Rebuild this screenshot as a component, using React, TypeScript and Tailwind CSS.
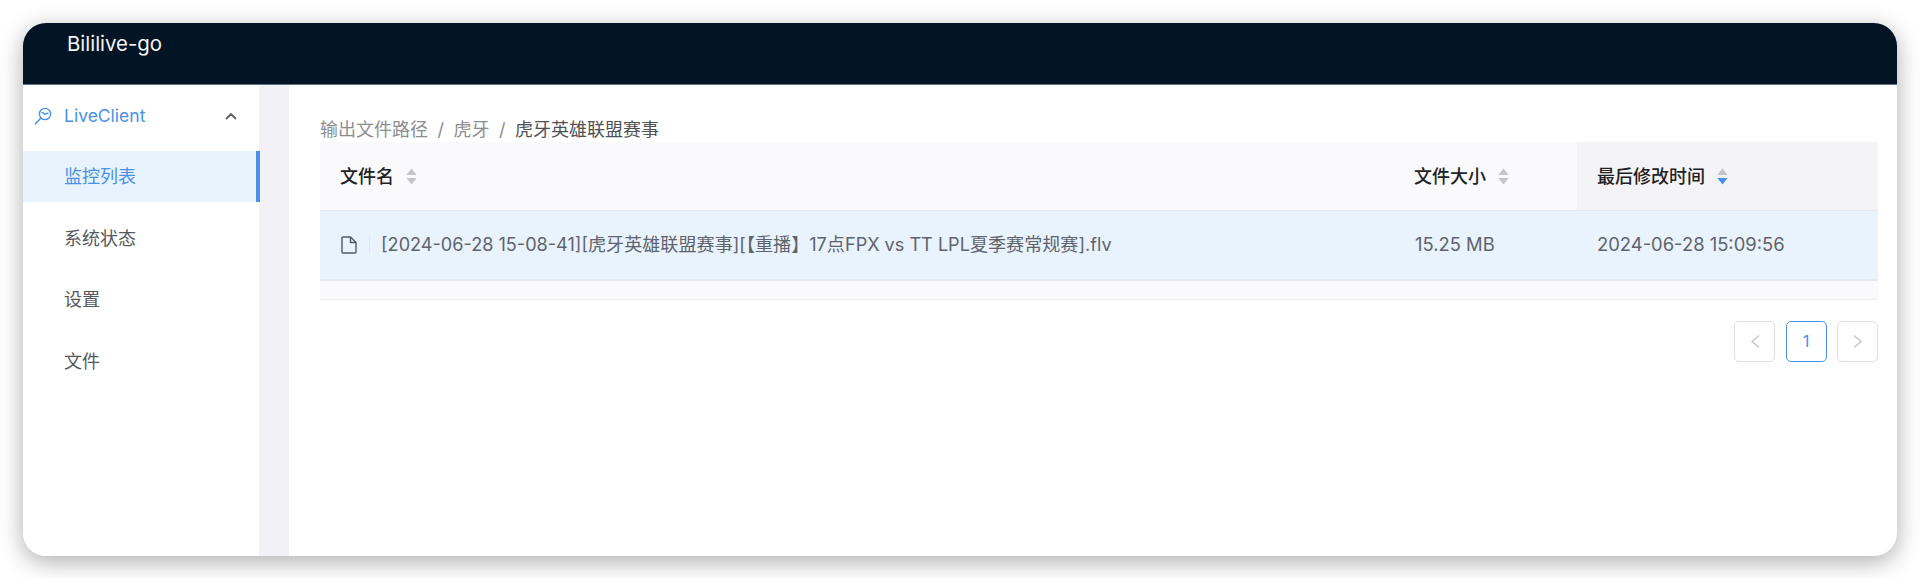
function Sort({ active = false }: { active?: boolean }) {
  return (
    <svg width="11" height="17" viewBox="0 0 11 17" className="shrink-0">
      <path d="M5.5 0.5 L10.6 7 H0.4 Z" fill="#c4c5c8" />
      <path d="M5.5 16.5 L10.6 10 H0.4 Z" fill={active ? "#4a90e8" : "#c4c5c8"} />
    </svg>
  );
}

function HeadCell({ label, active = false, className = "" }: { label: string; active?: boolean; className?: string }) {
  return (
    <div className={`flex items-center gap-[12px] pl-[20px] text-[18px] font-medium text-[#1f2225] ${className}`}>
      <span>{label}</span>
      <Sort active={active} />
    </div>
  );
}

function PageButton({ children, active = false }: { children: React.ReactNode; active?: boolean }) {
  return (
    <div
      className={`flex h-[41px] w-[41px] items-center justify-center rounded-[5px] border text-[16.5px] ${
        active ? "border-[#4a90e8] text-[#4a90e8]" : "border-[#e0e0e6] text-[#c2c2c5]"
      }`}
    >
      {children}
    </div>
  );
}

export default function App() {
  return (
    <div className="h-[578px] w-[1920px] overflow-hidden bg-white p-[23px] pb-[22px] font-['Inter','Noto_Sans_CJK_SC',sans-serif]">
      <div className="flex h-[533px] flex-col overflow-hidden rounded-[23px] bg-white shadow-[0_6px_24px_rgba(0,0,0,0.32)]">
        <header className="h-[62px] shrink-0 border-b border-[#5f7080] bg-[#031424] pl-[44px] pt-[8px] text-[20.4px] leading-[26px] text-[#f4f6f8]">
          Bililive-go
        </header>
        <div className="flex min-h-0 flex-1">
          <aside className="w-[236px] shrink-0 bg-white pt-[6px]">
            <div className="flex h-[50px] items-center pl-[11px] pr-[22px] text-[17.5px] text-[#4a90e8]">
              <svg width="18" height="18" viewBox="0 0 18 18" fill="none" stroke="#4a90e8" strokeWidth="1.4" className="shrink-0">
                <circle cx="11" cy="7" r="5.6" />
                <path d="M7 11 L1.5 16.8" strokeLinecap="round" strokeWidth="1.6" />
                <path d="M8 5.4 L11 7.2 L14 6.2" strokeLinecap="round" />
              </svg>
              <span className="ml-[12px] flex-1">LiveClient</span>
              <svg width="12" height="8" viewBox="0 0 12 8" fill="none" stroke="#606368" strokeWidth="1.8" className="shrink-0">
                <path d="M1.5 6.5 L6 2 L10.5 6.5" strokeLinecap="round" strokeLinejoin="round" />
              </svg>
            </div>
            <div className="relative mr-[-1px] mt-[10px] flex h-[51px] items-center border-r-[4px] border-[#4a90e8] bg-[#e8f3fd] pl-[41px] text-[18px] text-[#4a90e8]">
              监控列表
            </div>
            <div className="mt-[10.5px] flex h-[51px] items-center pl-[41px] text-[18px] text-[#55585c]">系统状态</div>
            <div className="mt-[10.5px] flex h-[51px] items-center pl-[41px] text-[18px] text-[#55585c]">设置</div>
            <div className="mt-[10.5px] flex h-[51px] items-center pl-[41px] text-[18px] text-[#55585c]">文件</div>
          </aside>
          <div className="w-[30px] shrink-0 bg-[#f2f2f6]" />
          <main className="min-w-0 flex-1 pl-[31px] pr-[19px]">
            <nav className="flex h-[57px] items-end text-[18px] leading-[24px] text-[#8b8d90]">
              <span>输出文件路径</span>
              <span className="mx-[9.5px]">/</span>
              <span>虎牙</span>
              <span className="mx-[9.5px]">/</span>
              <span className="text-[#4f5256]">虎牙英雄联盟赛事</span>
            </nav>
            <div className="grid grid-cols-[1074px_183px_1fr]">
              <HeadCell label="文件名" className="h-[69px] border-b border-[#e8e8ec] bg-[#fafafc]" />
              <HeadCell label="文件大小" className="h-[69px] border-b border-[#e8e8ec] bg-[#fafafc]" />
              <HeadCell label="最后修改时间" active className="h-[69px] border-b border-[#e8e8ec] bg-[#f4f4f6]" />
              <div className="flex h-[70px] items-center border-b-[2px] border-[#e4e9ef] bg-[#e8f3fd] pl-[21px] text-[18.1px] text-[#5f646c]">
                <svg width="16" height="18" viewBox="0 0 16 18" fill="none" stroke="#55585d" strokeWidth="1.4" strokeLinejoin="round" className="shrink-0">
                  <path d="M1 2 a1 1 0 0 1 1 -1 H9.5 L15 6.5 V16 a1 1 0 0 1 -1 1 H2 a1 1 0 0 1 -1 -1 Z" />
                  <path d="M9.5 1 V6.5 H15" />
                </svg>
                <span className="ml-[12px] mr-[11px] h-[18px] w-px bg-[#dfe6ee]" />
                <span className="whitespace-nowrap">[2024-06-28 15-08-41][虎牙英雄联盟赛事][【重播】17点FPX vs TT LPL夏季赛常规赛].flv</span>
              </div>
              <div className="flex h-[70px] items-center border-b-[2px] border-[#e4e9ef] bg-[#e8f3fd] pl-[21px] text-[18.4px] text-[#5f646c]">15.25 MB</div>
              <div className="flex h-[70px] items-center border-b-[2px] border-[#e4e9ef] bg-[#e8f3fd] pl-[20px] text-[18.4px] text-[#5f646c]">2024-06-28 15:09:56</div>
            </div>
            <div className="h-[19px] border-b border-[#eeeef0] bg-[#fafafc]" />
            <div className="mt-[21px] flex justify-end gap-[10.5px]">
              <PageButton>
                <svg width="12" height="15" viewBox="0 0 12 15" fill="none" stroke="#c2c2c5" strokeWidth="1.3"><path d="M10 1.5 L3 7.5 L10 13.5" /></svg>
              </PageButton>
              <PageButton active>1</PageButton>
              <PageButton>
                <svg width="12" height="15" viewBox="0 0 12 15" fill="none" stroke="#c2c2c5" strokeWidth="1.3"><path d="M2 1.5 L9 7.5 L2 13.5" /></svg>
              </PageButton>
            </div>
          </main>
        </div>
      </div>
    </div>
  );
}
